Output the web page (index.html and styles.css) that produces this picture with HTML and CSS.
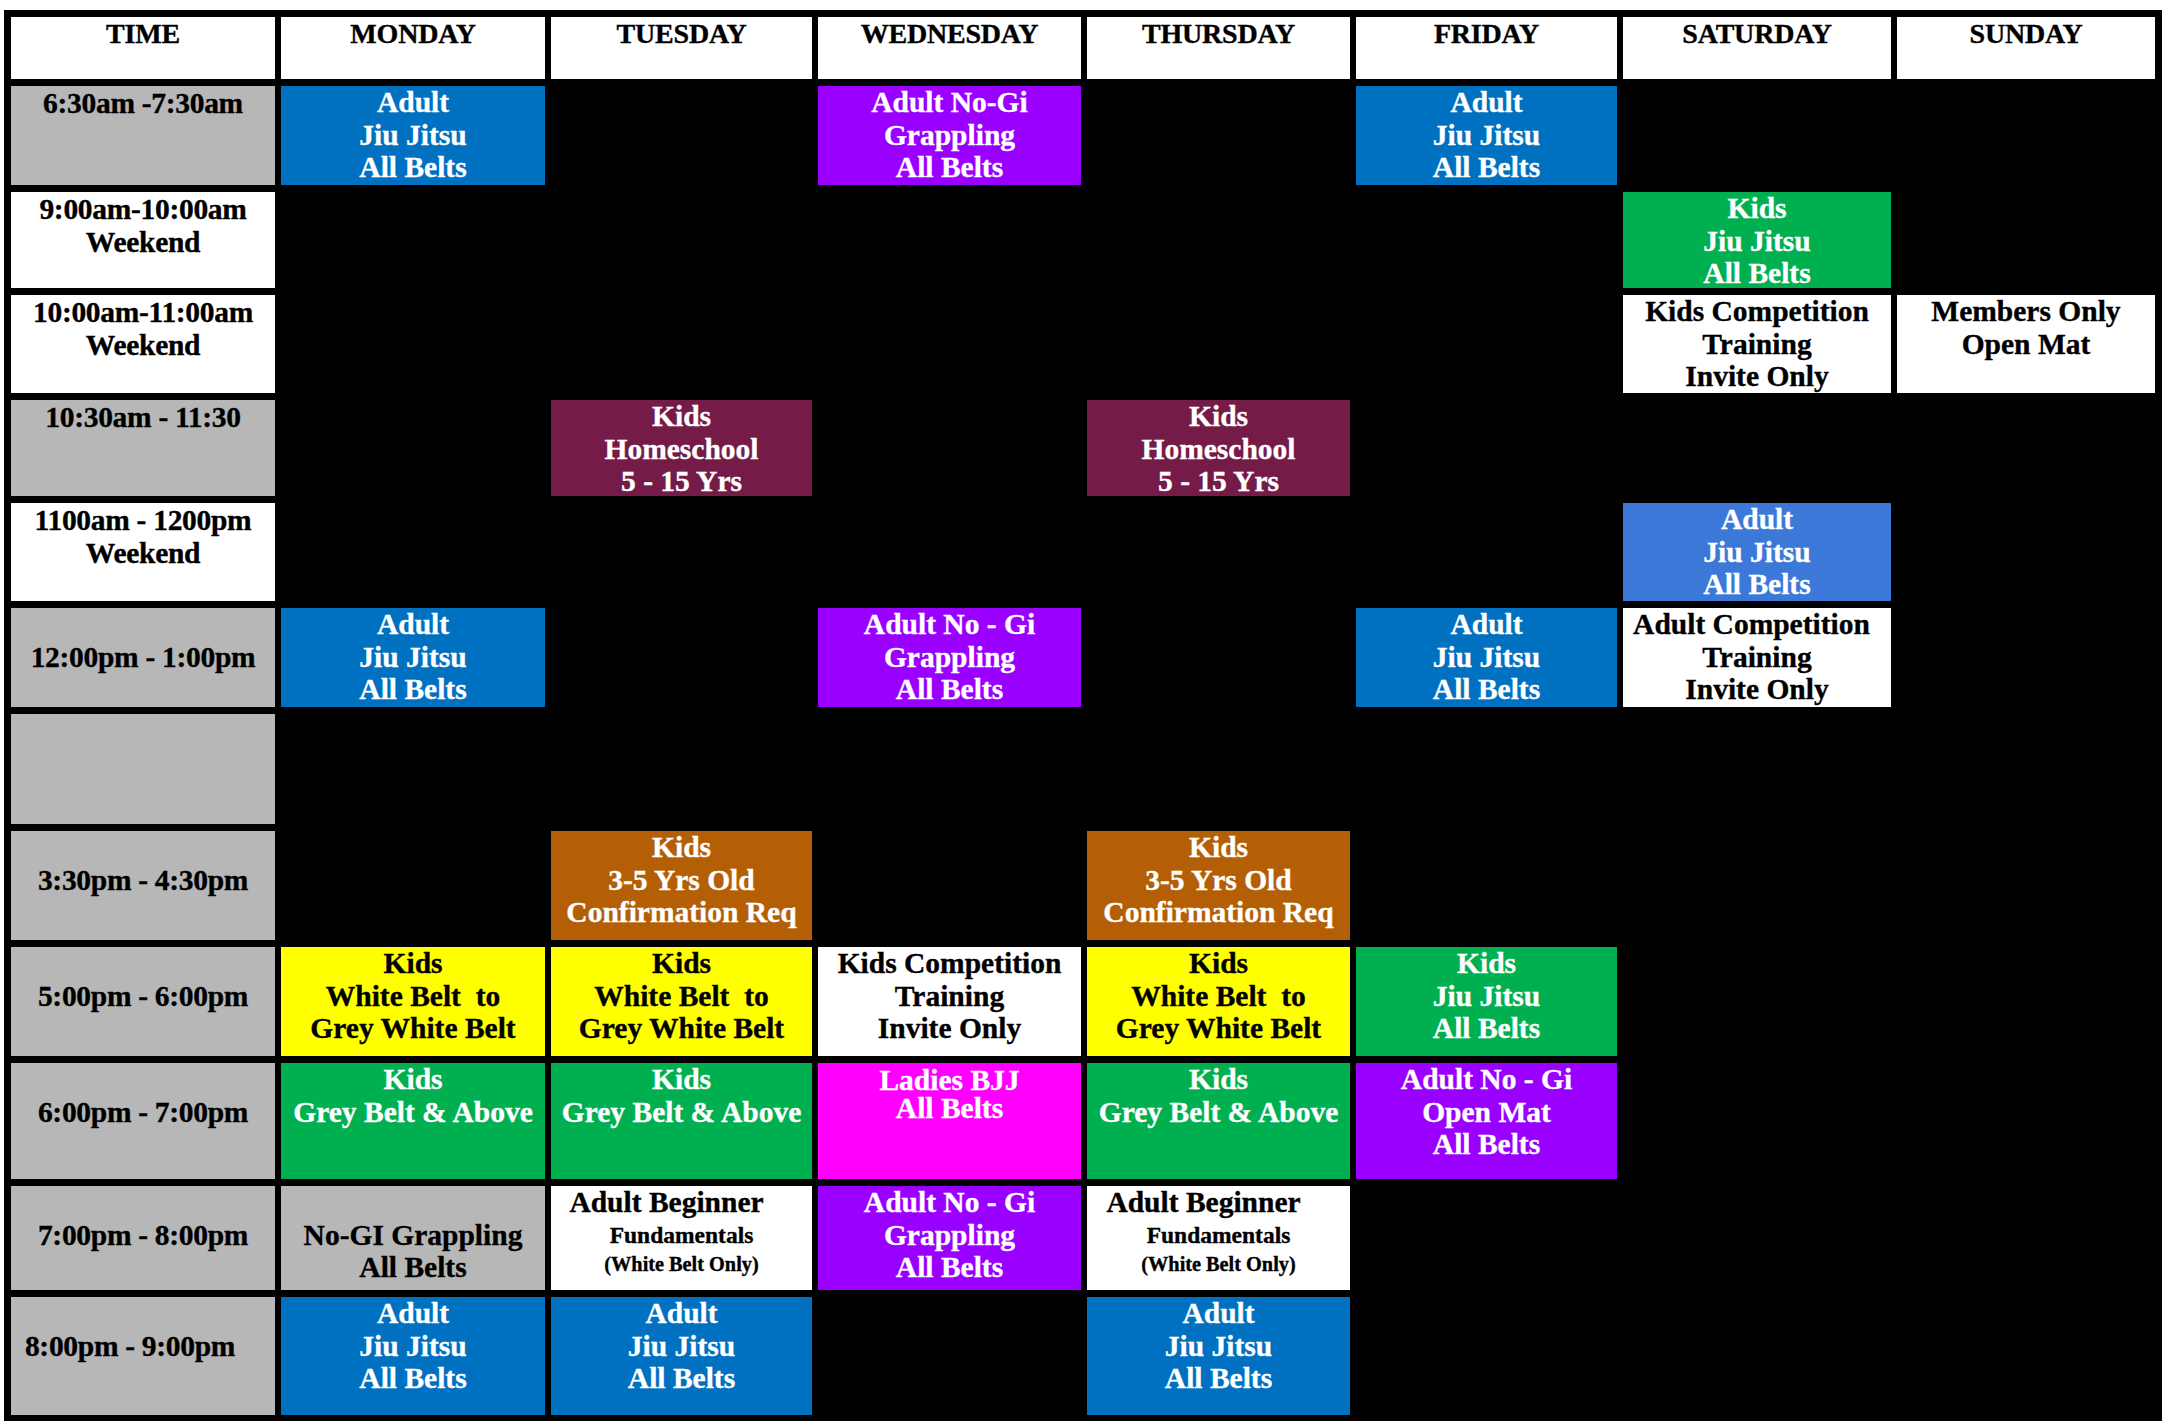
FILE: index.html
```html
<!DOCTYPE html>
<html lang="en">
<head>
<meta charset="utf-8">
<title>Class Schedule</title>
<link rel="stylesheet" href="styles.css">
</head>
<body>
<div class="sheet">
  <!-- header -->
  <div class="c hd">TIME</div>
  <div class="c hd">MONDAY</div>
  <div class="c hd">TUESDAY</div>
  <div class="c hd">WEDNESDAY</div>
  <div class="c hd">THURSDAY</div>
  <div class="c hd">FRIDAY</div>
  <div class="c hd">SATURDAY</div>
  <div class="c hd">SUNDAY</div>

  <!-- 6:30 -->
  <div class="c gray tm">6:30am -7:30am</div>
  <div class="c blue">Adult<br>Jiu Jitsu<br>All Belts</div>
  <div class="c e"></div>
  <div class="c purple">Adult No-Gi<br>Grappling<br>All Belts</div>
  <div class="c e"></div>
  <div class="c blue">Adult<br>Jiu Jitsu<br>All Belts</div>
  <div class="c e"></div>
  <div class="c e"></div>

  <!-- 9:00 -->
  <div class="c white tm">9:00am-10:00am<br>Weekend</div>
  <div class="c e"></div>
  <div class="c e"></div>
  <div class="c e"></div>
  <div class="c e"></div>
  <div class="c e"></div>
  <div class="c green">Kids<br>Jiu Jitsu<br>All Belts</div>
  <div class="c e"></div>

  <!-- 10:00 -->
  <div class="c white tm">10:00am-11:00am<br>Weekend</div>
  <div class="c e"></div>
  <div class="c e"></div>
  <div class="c e"></div>
  <div class="c e"></div>
  <div class="c e"></div>
  <div class="c white">Kids Competition<br>Training<br>Invite Only</div>
  <div class="c white">Members Only<br>Open Mat</div>

  <!-- 10:30 -->
  <div class="c gray tm">10:30am - 11:30</div>
  <div class="c e"></div>
  <div class="c maroon">Kids<br>Homeschool<br>5 - 15 Yrs</div>
  <div class="c e"></div>
  <div class="c maroon">Kids<br>Homeschool<br>5 - 15 Yrs</div>
  <div class="c e"></div>
  <div class="c e"></div>
  <div class="c e"></div>

  <!-- 11:00 -->
  <div class="c white tm">1100am - 1200pm<br>Weekend</div>
  <div class="c e"></div>
  <div class="c e"></div>
  <div class="c e"></div>
  <div class="c e"></div>
  <div class="c e"></div>
  <div class="c lblue">Adult<br>Jiu Jitsu<br>All Belts</div>
  <div class="c e"></div>

  <!-- 12:00 -->
  <div class="c gray tm mid">12:00pm - 1:00pm</div>
  <div class="c blue">Adult<br>Jiu Jitsu<br>All Belts</div>
  <div class="c e"></div>
  <div class="c purple">Adult No - Gi<br>Grappling<br>All Belts</div>
  <div class="c e"></div>
  <div class="c blue">Adult<br>Jiu Jitsu<br>All Belts</div>
  <div class="c white"><span class="shift-s">Adult Competition</span><br>Training<br>Invite Only</div>
  <div class="c e"></div>

  <!-- blank -->
  <div class="c gray tm"></div>
  <div class="c e"></div>
  <div class="c e"></div>
  <div class="c e"></div>
  <div class="c e"></div>
  <div class="c e"></div>
  <div class="c e"></div>
  <div class="c e"></div>

  <!-- 3:30 -->
  <div class="c gray tm mid">3:30pm - 4:30pm</div>
  <div class="c e"></div>
  <div class="c brown">Kids<br>3-5 Yrs Old<br>Confirmation Req</div>
  <div class="c e"></div>
  <div class="c brown">Kids<br>3-5 Yrs Old<br>Confirmation Req</div>
  <div class="c e"></div>
  <div class="c e"></div>
  <div class="c e"></div>

  <!-- 5:00 -->
  <div class="c gray tm mid">5:00pm - 6:00pm</div>
  <div class="c yellow">Kids<br>White Belt&nbsp; to<br>Grey White Belt</div>
  <div class="c yellow">Kids<br>White Belt&nbsp; to<br>Grey White Belt</div>
  <div class="c white">Kids Competition<br>Training<br>Invite Only</div>
  <div class="c yellow">Kids<br>White Belt&nbsp; to<br>Grey White Belt</div>
  <div class="c green">Kids<br>Jiu Jitsu<br>All Belts</div>
  <div class="c e"></div>
  <div class="c e"></div>

  <!-- 6:00 -->
  <div class="c gray tm mid">6:00pm - 7:00pm</div>
  <div class="c green">Kids<br>Grey Belt &amp; Above</div>
  <div class="c green">Kids<br>Grey Belt &amp; Above</div>
  <div class="c magenta tight">Ladies BJJ<br>All Belts</div>
  <div class="c green">Kids<br>Grey Belt &amp; Above</div>
  <div class="c purple">Adult No - Gi<br>Open Mat<br>All Belts</div>
  <div class="c e"></div>
  <div class="c e"></div>

  <!-- 7:00 -->
  <div class="c gray tm mid">7:00pm - 8:00pm</div>
  <div class="c gray mid">No-GI Grappling<br>All Belts</div>
  <div class="c white"><span class="shift-l">Adult Beginner</span><span class="fund">Fundamentals</span><span class="wbo">(White Belt Only)</span></div>
  <div class="c purple">Adult No - Gi<br>Grappling<br>All Belts</div>
  <div class="c white"><span class="shift-l">Adult Beginner</span><span class="fund">Fundamentals</span><span class="wbo">(White Belt Only)</span></div>
  <div class="c e"></div>
  <div class="c e"></div>
  <div class="c e"></div>

  <!-- 8:00 -->
  <div class="c gray tm mid left">8:00pm - 9:00pm</div>
  <div class="c blue">Adult<br>Jiu Jitsu<br>All Belts</div>
  <div class="c blue">Adult<br>Jiu Jitsu<br>All Belts</div>
  <div class="c e"></div>
  <div class="c blue">Adult<br>Jiu Jitsu<br>All Belts</div>
  <div class="c e"></div>
  <div class="c e"></div>
  <div class="c e"></div>
</div>
</body>
</html>
```

FILE: styles.css
```css
html, body {
  margin: 0;
  padding: 0;
  background: #ffffff;
}

.sheet {
  margin: 10px 0 0 4px;
  width: 2158px;
  box-sizing: border-box;
  padding: 7px 7px 6px 7px;
  background: #000000;
  display: grid;
  grid-template-columns: 264px 264px 261px 263px 263px 261px 268px 258px;
  grid-template-rows: 62px 99px 96px 98px 96px 98px 99px 110px 109px 109px 116px 104px 118px;
  column-gap: 6px;
  row-gap: 7px;
  font-family: "Liberation Serif", "Times New Roman", serif;
  font-weight: 700;
  font-size: 29.5px;
  line-height: 32.5px;
  text-align: center;
  color: #000;
}

.c {
  overflow: hidden;
  white-space: nowrap;
  -webkit-text-stroke: 0.35px currentColor;
}

.hd {
  background: #ffffff;
  font-size: 28px;
  line-height: 30px;
  padding-top: 2px;
  letter-spacing: -0.2px;
}

.tm {
  padding-top: 1px;
  letter-spacing: -0.3px;
}

.mid {
  padding-top: 32.5px;
}

.left {
  padding-right: 26px;
}

.e { background: #000000; }
.gray { background: #b7b7b7; color: #000; }
.white { background: #ffffff; color: #000; }
.blue { background: #0070c0; color: #fff; }
.lblue { background: #3c78d8; color: #fff; }
.purple { background: #9900ff; color: #fff; }
.green { background: #00b050; color: #fff; }
.yellow { background: #ffff00; color: #000; }
.magenta { background: #ff00ff; color: #fff; }
.brown { background: #b45f06; color: #fff; }
.maroon { background: #741b47; color: #fff; }

.tight {
  line-height: 28px;
  padding-top: 3px;
}

.shift-l {
  display: block;
  padding-right: 30px;
}

.shift-s {
  padding-right: 11px;
}

.fund {
  display: block;
  font-size: 23.5px;
  line-height: 32px;
}

.wbo {
  display: block;
  font-size: 20.3px;
  line-height: 26px;
}
```
